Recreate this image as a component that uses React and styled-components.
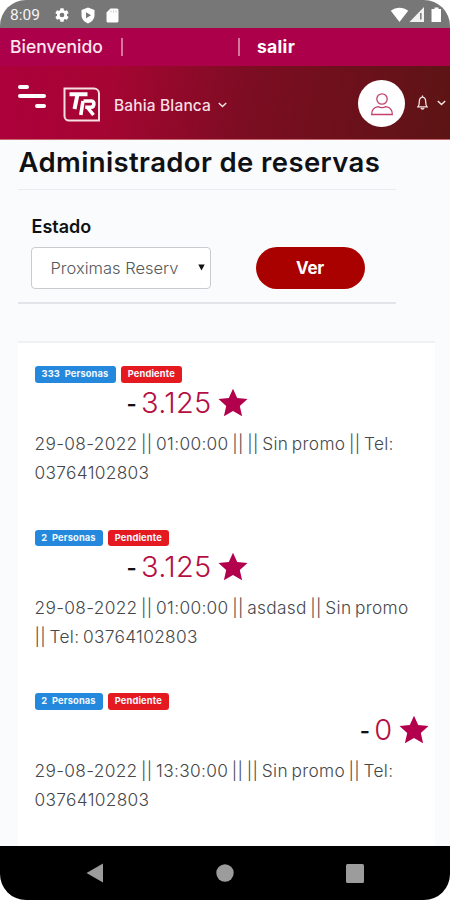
import React from 'react'
import styled, { createGlobalStyle } from 'styled-components'

const GlobalStyle = createGlobalStyle`
    * {
        box-sizing: border-box;
    }
    body {
        margin: 0;
        background: #fff;
        font-family: Inter, "Liberation Sans", sans-serif;
    }
`

const Phone = styled.div`
    width: 450px;
    height: 900px;
    display: flex;
    flex-direction: column;
    overflow: hidden;
    border-radius: 26px;
    background: #fafbfd;
`
const StatusBar = styled.div`
    flex: none;
    height: 28px;
    padding: 2px 7px 0 10px;
    display: flex;
    align-items: center;
    justify-content: space-between;
    background: #777;
    color: #f4f4f4;
`
const Clock = styled.span`
    width: 44px;
    font-family: Roboto, sans-serif;
    font-size: 15.5px;
`
const StatusIcons = styled.div`
    display: flex;
    align-items: center;
    gap: ${({ $gap }) => $gap || 0}px;
`
const WelcomeBar = styled.div`
    flex: none;
    height: 38px;
    padding: 0 10px;
    display: flex;
    align-items: center;
    background: #ad004b;
    color: #fbe6ee;
    font-size: 17.5px;
    font-weight: 500;
    line-height: 38px;
`
const Welcome = styled.span`
    width: 111px;
`
const Separator = styled.span`
    width: 1.5px;
    height: 18px;
    margin-right: ${({ $gap }) => $gap}px;
    background: #d5769d;
`
const Logout = styled.a`
    color: #fff;
    font-weight: 700;
    letter-spacing: 0.3px;
`
const Header = styled.header`
    flex: none;
    height: 74px;
    padding: 0 4px 0 18px;
    display: flex;
    align-items: center;
    background: linear-gradient(100deg, #ad003c 0%, #a50532 25%, #7c0d22 55%, #5c1414 100%);
    border-bottom: 1px solid #c7686e;
    color: #f6dfe4;
`
const MenuButton = styled.div`
    width: 28px;
    height: 23px;
    margin: -13px 17px 0 0;
    display: flex;
    flex-direction: column;
    justify-content: space-between;
`
const MenuLine = styled.span`
    width: ${({ $width }) => $width}px;
    height: 4px;
    border-radius: 2px;
    background: #fff;
    align-self: ${({ $right }) => ($right ? 'flex-end' : 'flex-start')};
`
const LogoBox = styled.div`
    height: 35px;
    margin-top: 4px;
`
const City = styled.div`
    flex: 1;
    margin: 5px 0 0 13px;
    display: flex;
    align-items: center;
    gap: 7px;
    font-size: 15.5px;
    font-weight: 500;
    letter-spacing: 0.15px;
`
const Avatar = styled.div`
    width: 47px;
    height: 47px;
    margin: 2px 12px 0 0;
    display: flex;
    align-items: center;
    justify-content: center;
    border-radius: 50%;
    background: #fff;
`
const Alerts = styled.div`
    display: flex;
    align-items: center;
    gap: 9px;
`
const Content = styled.main`
    flex: 1;
    min-height: 0;
    padding: 0 15.5px 0 17.5px;
    overflow: hidden;
`
const FilterPanel = styled.section`
    width: 378px;
    height: 164px;
    border-bottom: 2px solid #e1e4e8;
`
const PageTitle = styled.h1`
    height: 50px;
    margin: 0;
    padding-left: 1px;
    border-bottom: 1px solid #e9ebee;
    color: #101114;
    font-size: 27.5px;
    font-weight: 600;
    letter-spacing: 0.38px;
    line-height: 44px;
    white-space: nowrap;
`
const Label = styled.label`
    display: block;
    height: 57px;
    padding: 26px 0 0 14px;
    color: #101114;
    font-size: 18px;
    font-weight: 600;
    line-height: 22px;
`
const FilterRow = styled.div`
    padding-left: 13px;
    display: flex;
    gap: 45px;
`
const SelectBox = styled.div`
    width: 180px;
    height: 42px;
    padding: 0 5px 1px 19px;
    display: flex;
    align-items: center;
    justify-content: space-between;
    border: 1.5px solid #c9cbce;
    border-radius: 4px;
    background: #fff;
    color: #55585d;
    font-size: 16.5px;
    font-weight: 300;
`
const Button = styled.button`
    width: 109px;
    height: 42px;
    padding: 0 0 1px;
    border: 0;
    border-radius: 21px;
    background: #a90000;
    color: #fff;
    font-family: inherit;
    font-size: 17px;
    font-weight: 700;
    letter-spacing: -0.3px;
`
const List = styled.section`
    height: 520px;
    margin-top: 37px;
    padding: 23px 6px 0 17px;
    border-top: 2px solid #eff1f3;
    background: #fff;
`
const Reservation = styled.article`
    height: 163.5px;
`
const Badges = styled.div`
    display: flex;
    gap: 5px;
`
const Badge = styled.span`
    width: ${({ $width }) => $width}px;
    height: 16.5px;
    border-radius: 3px;
    background: ${({ $color }) => $color};
    color: #f2f8ff;
    font-size: 9.3px;
    font-weight: 700;
    letter-spacing: 0.15px;
    line-height: 16px;
    text-align: center;
    white-space: pre;
`
const Points = styled.div`
    height: 40px;
    padding-left: ${({ $right }) => ($right ? 0 : 92)}px;
    display: flex;
    align-items: center;
    justify-content: ${({ $right }) => ($right ? 'flex-end' : 'flex-start')};
    color: #b50e42;
    font-size: 29px;
    font-weight: 300;
`
const Dash = styled.span`
    width: 14.5px;
    padding-top: 3px;
    color: #101114;
    font-size: 22px;
    font-weight: 600;
`
const Amount = styled.span`
    margin-right: 6px;
    letter-spacing: 0.3px;
`
const Details = styled.p`
    margin: 6.5px 0 0;
    color: #45474b;
    font-size: 17.3px;
    font-weight: 300;
    letter-spacing: 0.32px;
    word-spacing: -1.6px;
    line-height: 29px;
    white-space: pre;
`
const NavBar = styled.nav`
    flex: none;
    height: 54px;
    padding: 0 86px;
    display: flex;
    align-items: center;
    justify-content: space-between;
    background: #000;
`

const reservations = [
    { people: 333, points: '3.125', details: '29-08-2022 || 01:00:00 || || Sin promo || Tel:\n03764102803' },
    { people: 2, points: '3.125', details: '29-08-2022 || 01:00:00 || asdasd || Sin promo\n|| Tel: 03764102803' },
    { people: 2, points: '0', right: true, details: '29-08-2022 || 13:30:00 || || Sin promo || Tel:\n03764102803' },
]

const GearIcon = () => (
    <svg width="16" height="16" viewBox="0 0 24 24" fill="#fff">
        <path d="M19.4 13a7.500 7.500 0 0 0 0-2l2.200-1.700a.5.5 0 0 0 .1-.6l-2-3.500a.5.5 0 0 0-.6-.2l-2.500 1a7 7 0 0 0-1.700-1l-.4-2.600a.5.5 0 0 0-.5-.4h-4a.5.5 0 0 0-.5.4L9.100 5a7 7 0 0 0-1.700 1l-2.500-1a.5.5 0 0 0-.6.2l-2 3.500a.5.5 0 0 0 .1.6L4.600 11a7 7 0 0 0 0 2l-2.200 1.700a.5.5 0 0 0-.1.6l2 3.500c.1.2.4.3.6.2l2.500-1a7 7 0 0 0 1.700 1l.4 2.600c0 .2.2.4.5.4h4c.3 0 .5-.2.500-.4l.4-2.600a7 7 0 0 0 1.700-1l2.500 1c.2.1.5 0 .6-.2l2-3.500a.5.5 0 0 0-.1-.6zM12 15.500a3.500 3.500 0 1 1 0-7 3.500 3.500 0 0 1 0 7z" />
    </svg>
)

const ShieldIcon = () => (
    <svg width="14" height="17" viewBox="0 0 14 17">
        <path d="M7 .5 13.500 3v5c0 4-2.700 7-6.500 8.500C3.200 15 .5 12 .5 8V3z" fill="#fff" />
        <path d="m5 5.200 5 3-5 3z" fill="#777" />
    </svg>
)

const SdIcon = () => (
    <svg width="13" height="15" viewBox="0 0 13 15">
        <path d="M4.500.5H11a1.500 1.500 0 0 1 1.500 1.500v11a1.500 1.500 0 0 1-1.500 1.500H2A1.500 1.500 0 0 1 .5 13V4.500z" fill="#fff" />
        <path d="M5 2.500v2M7.500 2.500v2M10 2.500v2" stroke="#ccc" />
    </svg>
)

const SignalIcons = () => (
    <svg width="53" height="18" viewBox="0 0 53 18" fill="#fff">
        <path d="M.8 4.700C6 .8 13 .8 18.200 4.700L9.500 16z" />
        <path d="M34 1v15H19.500z" fill="#f2f2f2" />
        <path d="M30.800 7v6.500" stroke="#777" strokeWidth="1.500" />
        <path d="M44.500 1.500h4V3h2.500v13h-9.500V3h3z" />
    </svg>
)

const Logo = () => (
    <svg width="38" height="35" viewBox="0 0 38 35" fill="none" stroke="#fff">
        <path d="M1.500 1.500H31a5 5 0 0 1 5 5v27H6a4.500 4.500 0 0 1-4.500-4.500z" strokeWidth="2" stroke="#f7dfe3" />
        <path d="M6.500 7.200h18M14.500 7.500 11.500 22" strokeWidth="4" />
        <path d="M20.500 14h8.200c3 0 3 6.300-.8 6.300h-5.700M20 14l-2.200 14M24.500 20.500l6 7.500" strokeWidth="3.600" />
    </svg>
)

const Chevron = () => (
    <svg width="9" height="6" viewBox="0 0 9 6" fill="none" stroke="#f6e4e4" strokeWidth="1.500">
        <path d="m.8 1 3.700 3.500L8.200 1" />
    </svg>
)

const UserIcon = () => (
    <svg width="24" height="26" viewBox="0 0 24 26" fill="none" stroke="#c2416f" strokeWidth="1.300">
        <circle cx="12" cy="8" r="5.200" />
        <path d="M1.700 23.500c0-5 3-7.300 6.300-7.800 2.500 1.200 5.500 1.200 8 0 3.300.5 6.300 2.800 6.300 7.800z" />
    </svg>
)

const BellIcon = () => (
    <svg width="11" height="15" viewBox="0 0 11 15" fill="none" stroke="#f6e4e4" strokeWidth="1.300">
        <path d="M5.500.5v1.300M1 11.800h9c-1-1-1.300-2-1.300-5 0-2.800-1.200-4.600-3.200-4.600S2.300 4 2.300 6.800c0 3-.3 4-1.300 5zM4 13c.3 1.300 2.700 1.300 3 0" />
    </svg>
)

const Star = () => (
    <svg width="30" height="29" viewBox="0 0 30 29" fill="#b2004c">
        <path d="m15 .8 4.200 9.200 10.300 1-7.700 7 2.300 10.200-9.100-5.300-9.100 5.300L8.200 18 .5 11l10.300-1z" />
    </svg>
)

const ReservationRow = ({ item }) => (
    <Reservation>
        <Badges>
            <Badge $width={item.people > 99 ? 81 : 68} $color="#2489dc">{item.people + '  Personas'}</Badge>
            <Badge $width={61.5} $color="#e51a20">Pendiente</Badge>
        </Badges>
        <Points $right={item.right}>
            <Dash>-</Dash>
            <Amount>{item.points}</Amount>
            <Star />
        </Points>
        <Details>{item.details}</Details>
    </Reservation>
)

const App = () => {
    return (
        <>
            <GlobalStyle />
            <Phone>
                <StatusBar>
                    <StatusIcons>
                        <Clock>8:09</Clock>
                        <StatusIcons $gap={11}>
                            <GearIcon />
                            <ShieldIcon />
                            <SdIcon />
                        </StatusIcons>
                    </StatusIcons>
                    <SignalIcons />
                </StatusBar>
                <WelcomeBar>
                    <Welcome>Bienvenido</Welcome>
                    <Separator $gap={115.5} />
                    <Separator $gap={17.5} />
                    <Logout>salir</Logout>
                </WelcomeBar>
                <Header>
                    <MenuButton>
                        <MenuLine $width={11} />
                        <MenuLine $width={28} />
                        <MenuLine $width={11} $right />
                    </MenuButton>
                    <LogoBox>
                        <Logo />
                    </LogoBox>
                    <City>
                        Bahia Blanca
                        <Chevron />
                    </City>
                    <Avatar>
                        <UserIcon />
                    </Avatar>
                    <Alerts>
                        <BellIcon />
                        <Chevron />
                    </Alerts>
                </Header>
                <Content>
                    <FilterPanel>
                        <PageTitle>Administrador de reservas</PageTitle>
                        <Label>Estado</Label>
                        <FilterRow>
                            <SelectBox>
                                Proximas Reserv
                                <svg width="7" height="7" viewBox="0 0 7 7">
                                    <path d="M.3.5h6.400L3.500 6.500z" fill="#111" />
                                </svg>
                            </SelectBox>
                            <Button>Ver</Button>
                        </FilterRow>
                    </FilterPanel>
                    <List>
                        {reservations.map((item, index) => (
                            <ReservationRow key={index} item={item} />
                        ))}
                    </List>
                </Content>
                <NavBar>
                    <svg width="17" height="20" viewBox="0 0 17 20">
                        <path d="M.5 10 17 .5v19z" fill="#9c9c9c" />
                    </svg>
                    <svg width="18" height="18" viewBox="0 0 18 18">
                        <circle cx="9" cy="9" r="8.700" fill="#9c9c9c" />
                    </svg>
                    <svg width="18" height="19" viewBox="0 0 18 19">
                        <rect width="18" height="19" rx="1.500" fill="#9c9c9c" />
                    </svg>
                </NavBar>
            </Phone>
        </>
    )
}

export default App
